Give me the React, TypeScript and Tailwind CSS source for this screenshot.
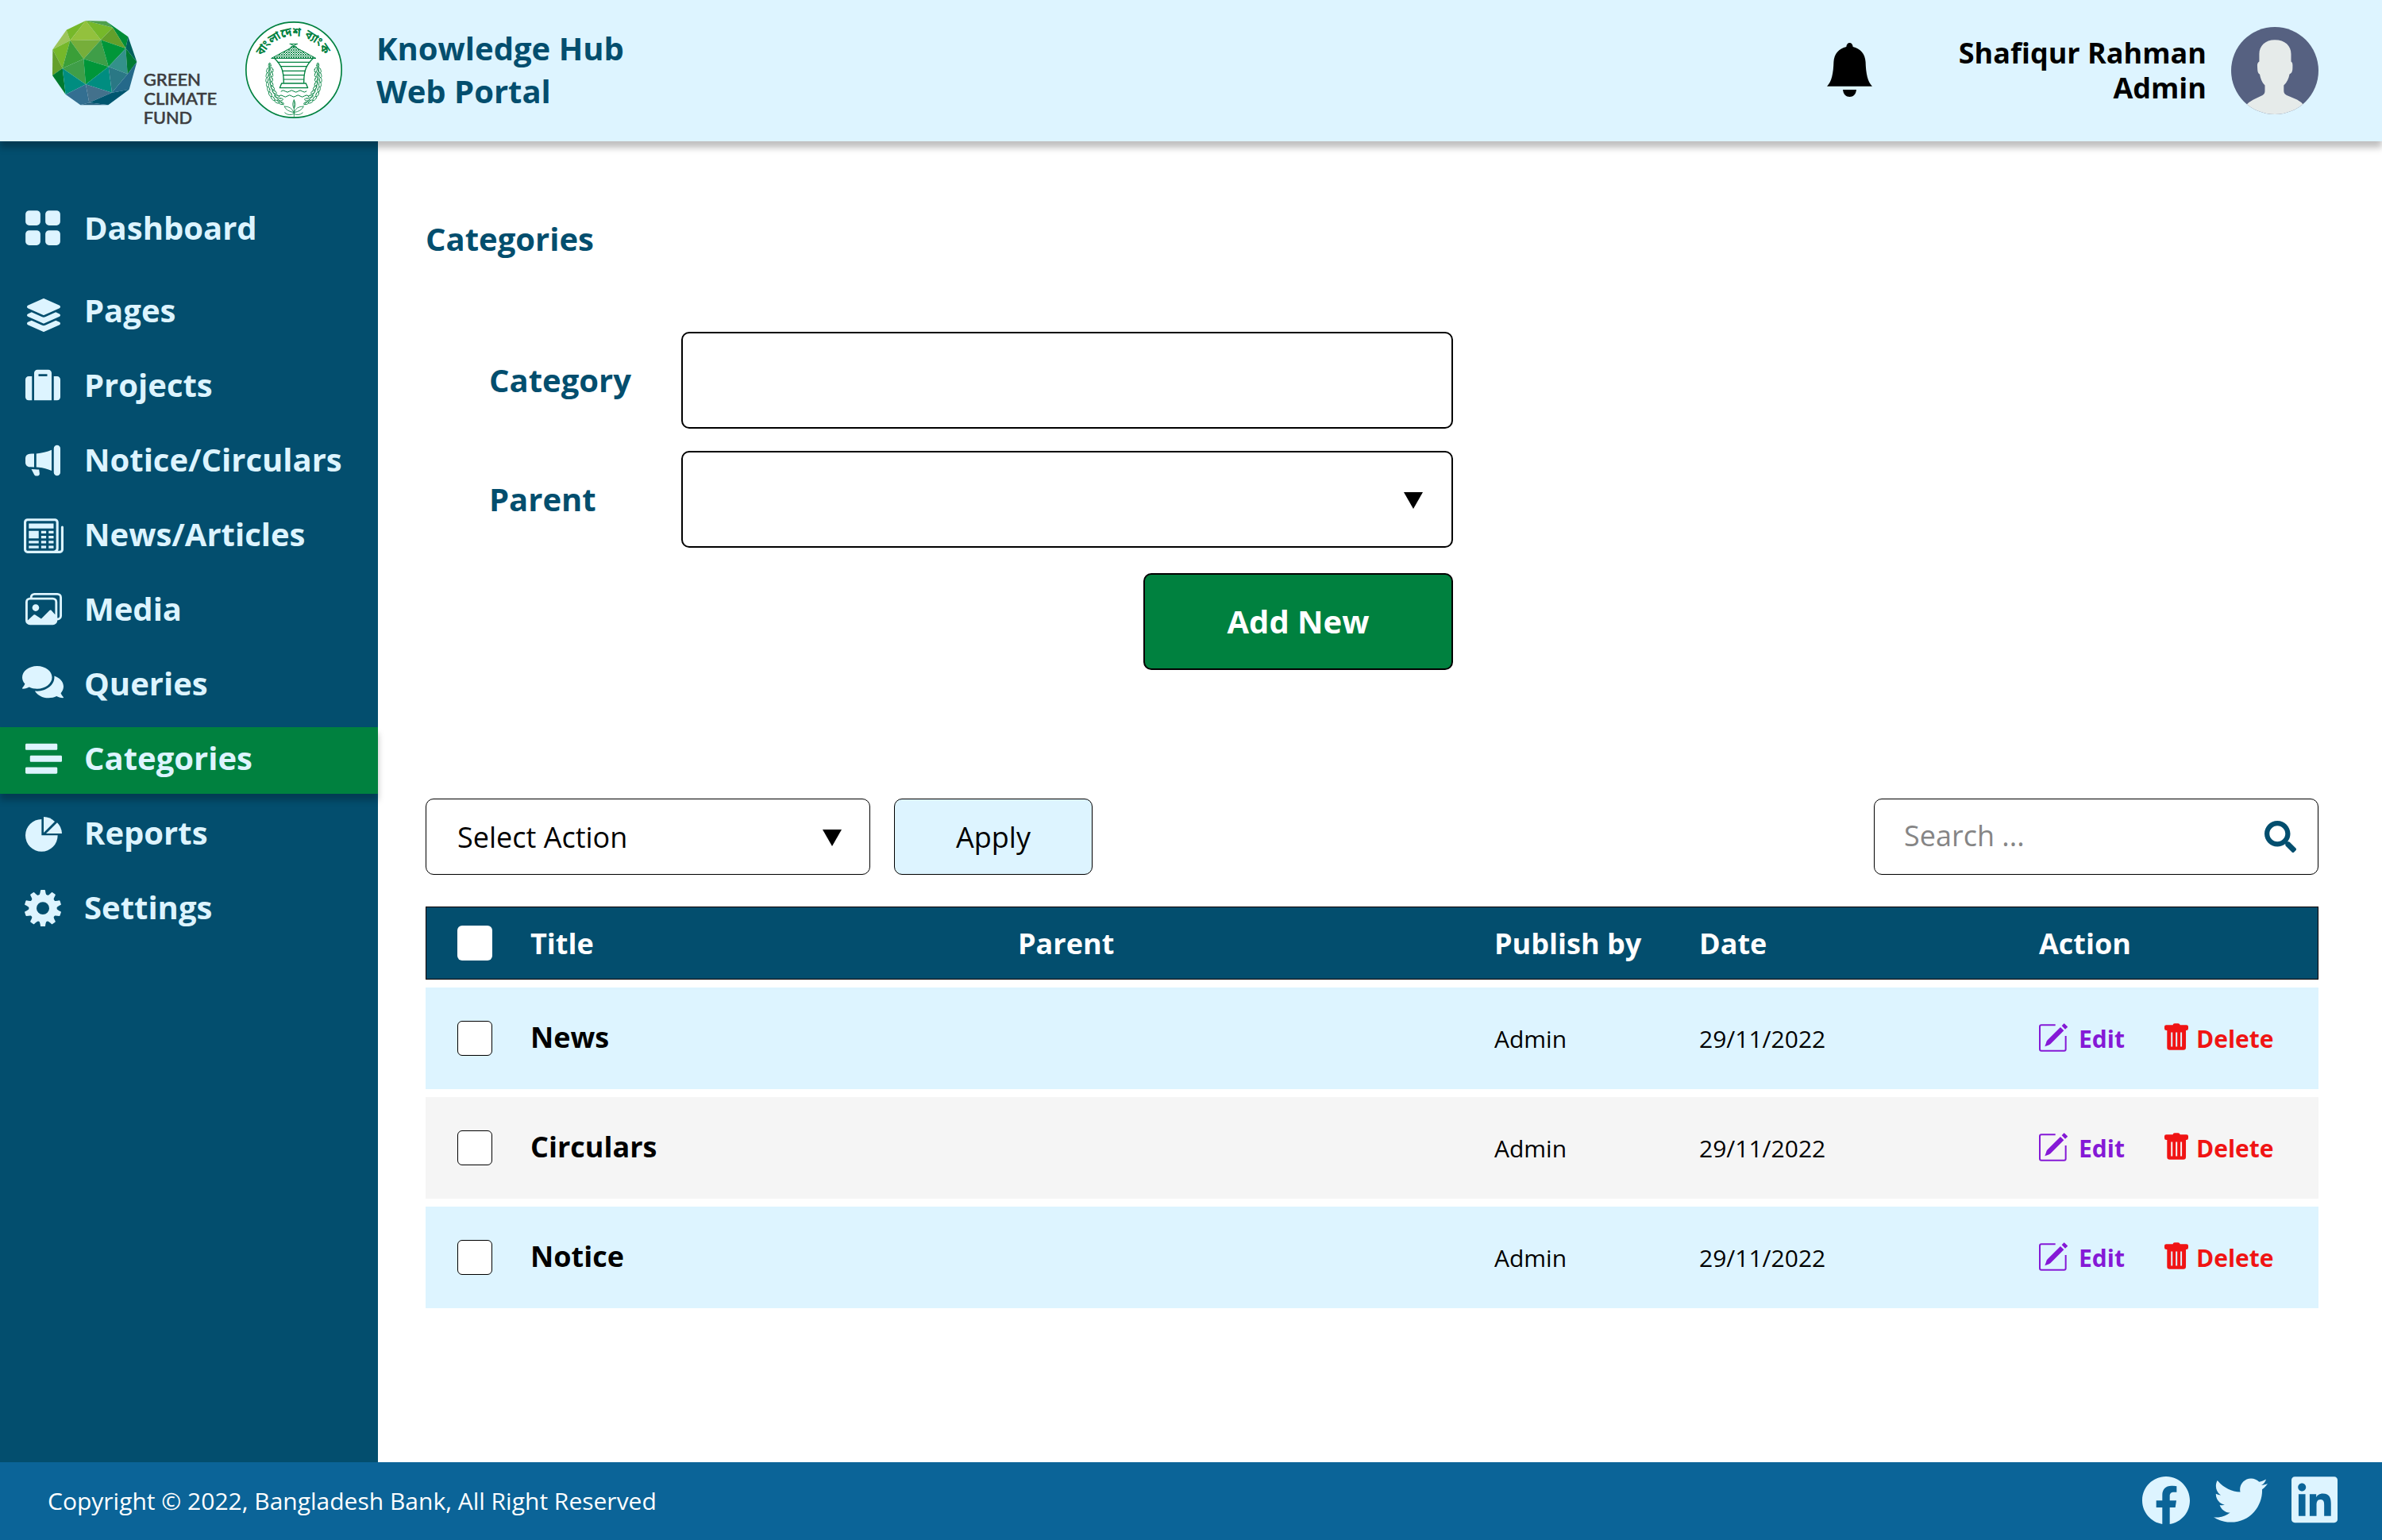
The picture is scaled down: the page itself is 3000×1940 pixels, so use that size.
import type { ComponentType, ReactNode } from "react";
import { BsFacebook, BsGridFill, BsImages, BsMegaphoneFill, BsNewspaper } from "react-icons/bs";
import { FaComments, FaLayerGroup, FaLinkedin, FaSearch, FaStream, FaSuitcase, FaTwitter } from "react-icons/fa";

type IconProps = { className?: string; preserveAspectRatio?: string };

const globeFaces: [string, string][] = [
  ["130,112 78,186 144,152", "#9dc55a"],
  ["130,112 203,77 144,152", "#76b82a"],
  ["203,77 144,152 260,150", "#93c13d"],
  ["203,77 260,150 305,103", "#76b82a"],
  ["203,77 280,79 305,103", "#4fa04c"],
  ["280,79 363,138 354,182 305,103", "#008c36"],
  ["305,103 260,150 354,182", "#649f2b"],
  ["144,152 260,150 195,222", "#76ae3a"],
  ["78,186 144,152 115,257", "#76b82a"],
  ["78,186 115,257 77,284", "#649f2b"],
  ["144,152 115,257 195,222", "#3a9f38"],
  ["260,150 195,222 289,251", "#3f9e48"],
  ["260,150 354,182 289,251", "#009639"],
  ["195,222 115,257 203,318", "#3f9e48"],
  ["195,222 289,251 203,318", "#009639"],
  ["77,284 115,257 127,356", "#007a2f"],
  ["115,257 203,318 127,356", "#008d80"],
  ["203,318 289,251 302,349", "#008d80"],
  ["289,251 354,182 361,279", "#33918a"],
  ["363,138 396,233 354,182", "#00605c"],
  ["354,182 396,233 361,279", "#007a33"],
  ["289,251 361,279 302,349", "#2a7885"],
  ["361,279 396,233 367,337 302,349", "#25698a"],
  ["127,356 203,318 216,387 183,396", "#336f91"],
  ["203,318 302,349 216,387", "#43718c"],
  ["302,349 367,337 288,396 216,387", "#00566f"],
  ["216,387 288,396 183,396", "#25607f"],
];

function ClimateFundLogo() {
  return (
    <svg viewBox="77 77 624 414" className="block h-[138px] w-[208px]">
      {globeFaces.map(([points, fill]) => (
        <polygon key={points} points={points} fill={fill} />
      ))}
      <g fill="#3c3c3e" fontFamily="Lato, sans-serif" fontSize="64" fontWeight="500" stroke="#3c3c3e" strokeWidth="1.500">
        <text x="421" y="323" textLength="217" lengthAdjust="spacingAndGlyphs">GREEN</text>
        <text x="423" y="395" textLength="276" lengthAdjust="spacingAndGlyphs">CLIMATE</text>
        <text x="421" y="467" textLength="184" lengthAdjust="spacingAndGlyphs">FUND</text>
      </g>
    </svg>
  );
}

const stemLeaves: [number, number, number][] = [
  [899, 247, 0],
  [892, 266, 15], [907, 264, -15],
  [890, 284, 12], [906, 281, -18],
  [889, 302, 8], [905, 299, -22],
  [891, 320, 0], [906, 317, -28],
  [895, 338, -12], [910, 332, -38],
  [901, 356, -25], [917, 348, -55],
  [911, 372, -40], [926, 364, -75],
  [926, 384, -60], [940, 376, -95],
  [943, 390, -75],
];

function Wreath() {
  return (
    <g>
      <path d="M899 240 C896 290 892 350 952 396" />
      {stemLeaves.map(([x, y, angle]) => (
        <ellipse key={`${x}-${y}`} cx={x} cy={y} rx="4.5" ry="9.5" transform={`rotate(${angle} ${x} ${y})`} />
      ))}
    </g>
  );
}

function BankLogo() {
  return (
    <svg viewBox="807 81 366 366" className="block size-[122px]">
      <defs>
        <path id="bank-arc" d="M873 214 A127 127 0 0 1 1107 214" />
        <pattern id="thatch" width="9" height="9" patternUnits="userSpaceOnUse">
          <path d="M0 9 L9 0 M0 0 L9 9" stroke="#00813f" strokeWidth="2.6" />
        </pattern>
      </defs>
      <circle cx="990" cy="264" r="180.5" fill="#fff" stroke="#00813f" strokeWidth="5" />
      <text fill="#00813f" fontSize="46" fontWeight="700" fontFamily="'Noto Sans Bengali', 'Noto Sans', sans-serif">
        <textPath href="#bank-arc" startOffset="0" textLength="290" lengthAdjust="spacingAndGlyphs">
          বাংলাদেশ ব্যাংক
        </textPath>
      </text>
      <g fill="none" stroke="#00813f" strokeWidth="3" strokeLinecap="round" strokeLinejoin="round">
        <path d="M906 220 L990 175 L1073 220 Z" fill="url(#thatch)" />
        <path d="M975 166 H1004 M978 167 L1001 178 M1001 167 L978 178" />
        <path d="M918 221 C940 243 952 262 952 312 M1062 221 C1040 243 1028 262 1028 312" strokeWidth="4" />
        <path d="M930 235 H1050 M940 251 H1040 M947 268 H1033 M951 284 H1029 M952 300 H1028" strokeWidth="3.5" />
        <path d="M944 315 H1036 L1043 332 H937 Z" strokeWidth="4" />
        <path d="M942 345 q8 -7 16 0 t16 0 t16 0 t16 0 t16 0 t16 0" />
        <path d="M934 363 q8 -7 16 0 t16 0 t16 0 t16 0 t16 0 t16 0 t16 0" />
      </g>
      <g fill="none" stroke="#00813f" strokeWidth="2.4" strokeLinecap="round">
        <Wreath />
        <g transform="translate(1980 0) scale(-1 1)">
          <Wreath />
        </g>
        <path d="M991 378 V440 M991 378 q-10 16 0 32 q10 -16 0 -32" />
        <path d="M990 425 Q982 402 954 402 Q962 420 990 425 M991 425 Q998 402 1027 402 Q1020 420 991 425" />
        <path d="M990 430 Q972 440 956 426 M991 430 Q1008 440 1024 426" />
      </g>
    </svg>
  );
}

function Bell() {
  return (
    <svg viewBox="0 0 57 68" className="block h-[68px] w-[57px]">
      <path d="M28.5 0 C31 0 32.4 2 32.7 5 C42 7 48 14 48.6 24 C49 38 51 49 57 54.7 H0 C6 49 8 38 8.4 24 C9 14 15 7 24.3 5 C24.6 2 26 0 28.5 0 Z" />
      <path d="M20 59 H37 C36.4 65 33 68 28.5 68 C24 68 20.6 65 20 59 Z" />
    </svg>
  );
}

function Avatar() {
  return (
    <svg viewBox="0 0 110 110" className="block size-[110px]">
      <defs>
        <clipPath id="avatar-clip">
          <circle cx="55" cy="55" r="55" />
        </clipPath>
      </defs>
      <g clipPath="url(#avatar-clip)">
        <rect width="110" height="110" fill="#566181" />
        <path
          fill="#e6ebea"
          d="M55 16.3 C43 16.3 35.4 24 35.4 34 V43.5 C33 45 32.8 47 33 50 C33.2 55 33.4 58.5 36 59.5 C37 65 38.5 69.5 42.5 73.5 V80 C42.5 83 42 84.5 39.5 86 L28 91.5 Q23 94 18 99 V115 H92 V99 Q88 94 83 91.5 L70 86 C67 84.5 66.3 83 66.3 80 V73.5 C70.5 69.5 72.5 65 73.5 59.5 C77 58 77.4 55 77.4 50 C77.5 47 77.5 45 75.5 43.5 V34 C75.5 24 68 16.3 55 16.3 Z"
        />
      </g>
    </svg>
  );
}

function PieIcon({ className }: IconProps) {
  return (
    <svg viewBox="0 0 138 131" className={className} fill="currentColor" preserveAspectRatio="none">
      <path d="M61 9 V70 H122 A61 61 0 1 1 61 9 Z" />
      <path d="M69 0 A62 62 0 0 1 111 18 L69 60 Z" />
      <path d="M120 22 A61 61 0 0 1 138 63 H78 Z" />
    </svg>
  );
}

function GearIcon({ className }: IconProps) {
  return (
    <svg viewBox="-72 -70 144 140" className={className} fill="currentColor" preserveAspectRatio="none">
      <path fillRule="evenodd" d="M0 -53 A53 53 0 1 1 0 53 A53 53 0 1 1 0 -53 Z M0 -24 A24 24 0 1 0 0 24 A24 24 0 1 0 0 -24 Z" />
      {[0, 36, 72, 108, 144, 180, 216, 252, 288, 324].map((angle) => (
        <path key={angle} transform={`rotate(${angle})`} d="M-15 -47 C-11 -54 -10 -60 -9 -68 Q-8.500 -70 -6 -70 H6 Q8.500 -70 9 -68 C10 -60 11 -54 15 -47 Z" />
      ))}
    </svg>
  );
}

function EditIcon() {
  return (
    <svg viewBox="0 0 108 108" className="block size-9" fill="none">
      <path d="M62 7 H9 Q3 7 3 13 V98 Q3 104 9 104 H95 Q101 104 101 98 V48" stroke="currentColor" strokeWidth="6" />
      <path d="M81 15 L94 28 L44 78 Q40 82 35 83 L22 88 L27 74 Q28 68 32 64 Z" fill="currentColor" />
      <path d="M86 10 L93 2 Q95 0 97 2 L107 12 Q109 14 107 16 L99 23 Z" fill="currentColor" />
    </svg>
  );
}

function TrashIcon() {
  return (
    <svg viewBox="0 0 91 102" className="block h-[34px] w-[30px]" fill="currentColor">
      <path d="M32 6 Q33 0 39 0 H52 Q58 0 60 6 H84 Q91 6 91 12 V20 Q91 27 84 27 H82 V92 Q82 102 72 102 H20 Q10 102 10 92 V27 H7 Q0 27 0 20 V12 Q0 6 7 6 Z M25 34 V89 H31 V34 Z M43 34 V89 H49 V34 Z M61 34 V89 H67 V34 Z" fillRule="evenodd" />
    </svg>
  );
}

function Triangle() {
  return (
    <svg viewBox="0 0 24 21" className="mt-[3px] block h-[21px] w-6">
      <path d="M0 0 H24 L12 21 Z" />
    </svg>
  );
}

type NavItem = { label: string; icon: ComponentType<IconProps>; iconClass: string; rowClass?: string };

const navItems: NavItem[] = [
  { label: "Dashboard", icon: BsGridFill, iconClass: "mt-[14.4px] ml-[29px] size-[50px]", rowClass: "mb-[10px]" },
  { label: "Pages", icon: FaLayerGroup, iconClass: "mt-[23.7px] ml-[34px] size-[42px]" },
  { label: "Projects", icon: FaSuitcase, iconClass: "mt-[16.6px] ml-8 size-11" },
  { label: "Notice/Circulars", icon: BsMegaphoneFill, iconClass: "mt-[18.3px] ml-8 size-11" },
  { label: "News/Articles", icon: BsNewspaper, iconClass: "mt-[16.3px] ml-[30px] size-[50px]" },
  { label: "Media", icon: BsImages, iconClass: "mt-[16.1px] ml-8 size-[46px]" },
  { label: "Queries", icon: FaComments, iconClass: "mt-[14.1px] ml-7 h-[46.2px] w-[52px]" },
  {
    label: "Categories",
    icon: FaStream,
    iconClass: "mt-[18.3px] ml-8 h-[43.4px] w-[46px]",
    rowClass: "bg-[#00813f] shadow-[0_8px_8px_rgba(0,0,0,0.25)]",
  },
  { label: "Reports", icon: PieIcon, iconClass: "mt-[19px] ml-8 h-[43.7px] w-[46px]" },
  { label: "Settings", icon: GearIcon, iconClass: "mt-[16.7px] ml-[30px] h-[46.3px] w-12" },
];

function Sidebar() {
  return (
    <nav className="flex w-[476px] shrink-0 flex-col gap-[10px] bg-[#034e6e] pt-[70px] text-[#ddf4ff]">
      {navItems.map(({ label, icon: Icon, iconClass, rowClass }) => (
        <a key={label} className={`flex h-[84px] w-full items-start ${rowClass ?? ""}`}>
          <span className="w-[106px] shrink-0">
            <Icon className={`block ${iconClass}`} preserveAspectRatio="none" />
          </span>
          <span className="mt-[11px] text-[40px] leading-[55px] font-bold whitespace-nowrap">{label}</span>
        </a>
      ))}
    </nav>
  );
}

function Header() {
  return (
    <header className="relative z-10 flex h-[178px] shrink-0 items-start bg-[#ddf4ff] pr-20 pl-[66px] shadow-[0_8px_8px_rgba(0,0,0,0.25)]">
      <div className="mt-[26px]">
        <ClimateFundLogo />
      </div>
      <div className="mt-[27px] ml-[35px]">
        <BankLogo />
      </div>
      <h1 className="mt-[34px] ml-[43px] text-[40px] leading-[54px] font-bold text-[#034e6e]">
        Knowledge Hub
        <br />
        Web Portal
      </h1>
      <div className="mt-[54px] ml-auto">
        <Bell />
      </div>
      <p className="mt-[45px] ml-[101px] w-[320px] text-right text-[36px] leading-[44px] font-bold whitespace-nowrap">
        Shafiqur Rahman
        <br />
        Admin
      </p>
      <div className="mt-[34px] ml-[31px]">
        <Avatar />
      </div>
    </header>
  );
}

function Field({ label, children }: { label: string; children?: ReactNode }) {
  return (
    <label className="flex items-center">
      <span className="w-[242px] text-[40px] font-bold text-[#034e6e]">{label}</span>
      <span className="flex h-[122px] w-[972px] items-center justify-end rounded-[10px] border-2 border-black bg-white pr-9">
        {children}
      </span>
    </label>
  );
}

const columns = "grid grid-cols-[92px_614px_600px_258px_428px_1fr] items-center pl-10";

const rows = [
  { title: "News", tone: "bg-[#ddf4ff]" },
  { title: "Circulars", tone: "bg-[#f5f5f5]" },
  { title: "Notice", tone: "bg-[#ddf4ff]" },
];

function CategoryTable() {
  return (
    <section className="mt-10 flex flex-col gap-[10px]">
      <div className={`${columns} h-[92px] bg-[#034e6e] text-[36px] font-bold text-white outline-1 -outline-offset-1 outline-black`}>
        <span className="size-11 rounded-md bg-white" />
        <span className="pt-[2px]">Title</span>
        <span className="pt-[2px]">Parent</span>
        <span className="pt-[2px]">Publish by</span>
        <span className="pt-[2px]">Date</span>
        <span className="pt-[2px]">Action</span>
      </div>
      {rows.map(({ title, tone }) => (
        <div key={title} className={`${columns} h-32 text-[30px] ${tone}`}>
          <span className="size-11 rounded-md border border-black bg-white" />
          <span className="pb-[2px] text-[36px] font-bold">{title}</span>
          <span />
          <span>Admin</span>
          <span>29/11/2022</span>
          <span className="flex items-center font-bold">
            <span className="flex w-[158px] items-center gap-[14px] text-[#8519d6]">
              <span className="-mt-[2px]">
                <EditIcon />
              </span>
              Edit
            </span>
            <span className="flex items-center gap-[10px] text-[#f01414]">
              <span className="-mt-1">
                <TrashIcon />
              </span>
              Delete
            </span>
          </span>
        </div>
      ))}
    </section>
  );
}

export default function App() {
  return (
    <div className="flex h-[1940px] w-[3000px] flex-col overflow-hidden bg-white font-['Open_Sans',sans-serif] text-black">
      <Header />
      <div className="flex min-h-0 flex-1">
        <Sidebar />
        <main className="flex flex-1 flex-col pt-[95px] pr-20 pl-[60px]">
          <h2 className="text-[40px] leading-[55px] font-bold text-[#034e6e]">Categories</h2>
          <form className="mt-[90px] ml-20 flex w-[1214px] flex-col gap-7">
            <Field label="Category" />
            <Field label="Parent">
              <Triangle />
            </Field>
            <button type="button" className="mt-1 h-[122px] w-[390px] self-end rounded-[10px] border-2 border-black bg-[#00813f] text-[40px] font-bold text-white">
              Add New
            </button>
          </form>
          <div className="mt-[162px] flex h-24 items-stretch gap-[30px] text-[36px]">
            <div className="flex w-[560px] items-center justify-between rounded-[10px] border border-black pr-[35px] pl-[39px]">
              <span className="pt-[2px]">Select Action</span>
              <Triangle />
            </div>
            <button type="button" className="w-[250px] rounded-[10px] border border-black bg-[#ddf4ff] pt-[2px]">
              Apply
            </button>
            <div className="ml-auto flex w-[560px] items-center justify-between rounded-[10px] border border-black pr-[27px] pl-[37px] text-[#858585]">
              <span className="pb-[2px]">Search ...</span>
              <FaSearch className="size-10 text-[#034e6e]" />
            </div>
          </div>
          <CategoryTable />
        </main>
      </div>
      <footer className="flex h-[98px] shrink-0 items-start bg-[#0b6498] pr-14 pl-[60px] text-[#ddf4ff]">
        <p className="mt-7 text-[30px] leading-[41px] text-white">Copyright © 2022, Bangladesh Bank, All Right Reserved</p>
        <BsFacebook className="mt-[18px] ml-auto size-[60px]" />
        <FaTwitter className="mt-[14px] ml-[30px] size-[68px]" />
        <FaLinkedin className="mt-[14px] ml-[30px] h-[66.3px] w-[58px]" />
      </footer>
    </div>
  );
}
